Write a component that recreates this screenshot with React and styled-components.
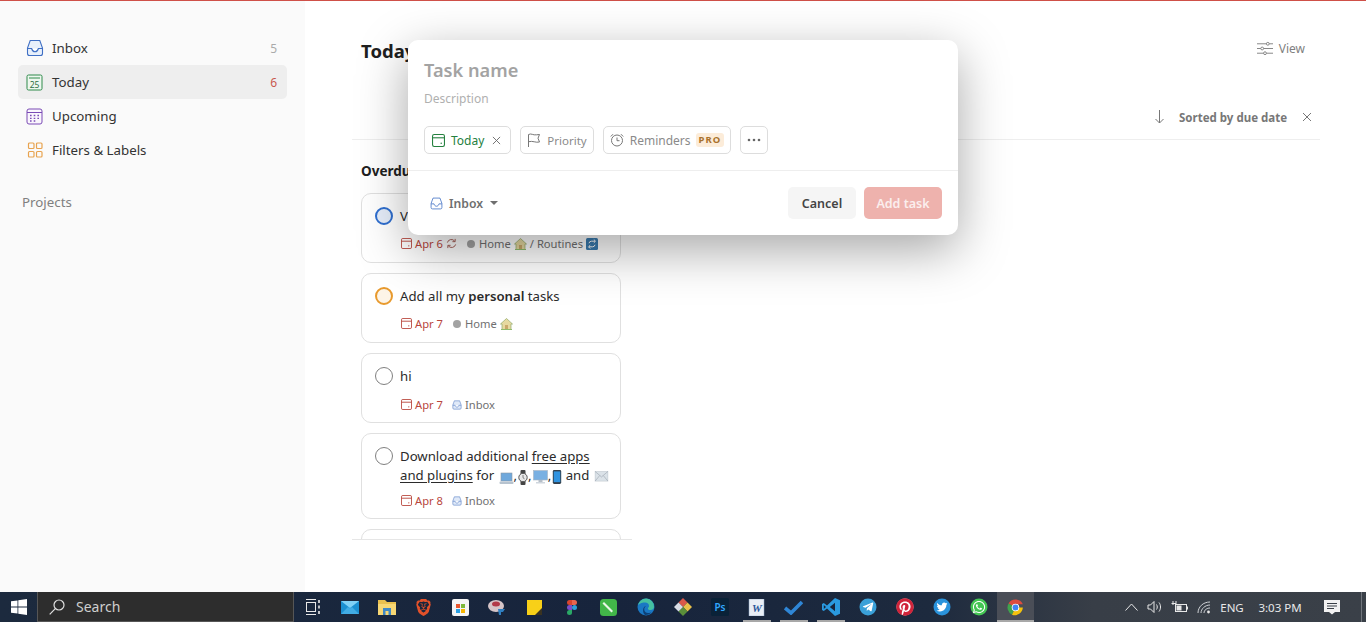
// App.jsx
import React from 'react';
import styled, { createGlobalStyle } from 'styled-components';
import { FaTwitter, FaWhatsapp, FaPinterest, FaTelegramPlane } from 'react-icons/fa';
import { SiBrave } from 'react-icons/si';

const GlobalStyle = createGlobalStyle`
  html, body { margin: 0; padding: 0; height: 100%; overflow: hidden; background: #fff; }
  body { font-family: "Noto Sans", "Open Sans", sans-serif; color: #202020; }
  * { box-sizing: border-box; }
`;

const Page = styled.div`
  position: relative;
  display: flex;
  flex-direction: column;
  height: 622px;
  border-top: 1px solid #cf5048;
`;

const Body = styled.div`
  position: relative;
  flex: 1;
  display: flex;
  min-height: 0;
`;

/* sidebar */
const Sidebar = styled.aside`
  width: 305px;
  flex-shrink: 0;
  background: #fafafa;
  padding: 30px 18px 0;
`;

const NavRow = styled.div`
  display: flex;
  align-items: center;
  height: 34px;
  padding: 0 10px 0 8px;
  border-radius: 5px;
  font-size: 13.3px;
  color: #333;
  background: ${p => (p.$active ? '#eeeeee' : 'transparent')};
`;

const NavIcon = styled.span`
  display: flex;
  width: 18px;
  margin-right: 8px;
`;

const NavLabel = styled.span`
  flex: 1;
`;

const NavCount = styled.span`
  font-size: 12px;
  color: ${p => (p.$red ? '#c9584e' : '#aaa')};
`;

const SideHeading = styled.div`
  margin: 26px 0 0 4px;
  font-size: 13.3px;
  font-weight: 400;
  color: #808080;
`;

/* main column */
const Main = styled.main`
  flex: 1;
  padding: 34px 46px 0 47px;
  min-width: 0;
`;

const Header = styled.div`
  display: flex;
  align-items: center;
  justify-content: space-between;
  height: 30px;
  padding: 0 15px 0 9px;
`;

const Title = styled.h1`
  margin: 0;
  font-size: 18.5px;
  font-weight: 700;
  color: #202020;
`;

const ViewButton = styled.div`
  display: flex;
  align-items: center;
  gap: 6px;
  margin-bottom: 3px;
  font-size: 12px;
  color: #808080;
`;

const SortRow = styled.div`
  display: flex;
  align-items: center;
  height: 38px;
  margin-top: 37px;
  padding: 0 8px 7px 0;
  justify-content: flex-end;
  border-bottom: 1px solid #eee;
  font-size: 11.5px;
  font-weight: 700;
  color: #777;
`;

const SortLabel = styled.span`
  margin: 0 15px 0 15px;
`;

const Column = styled.section`
  width: 280px;
  height: 400px;
  padding: 21px 11px 0 9px;
  overflow: hidden;
  border-bottom: 1px solid #e6e6e6;
`;

const ColumnTitle = styled.div`
  font-size: 13.5px;
  font-weight: 700;
  line-height: 20px;
  margin-bottom: 12px;
  color: #202020;
`;

const CardList = styled.div`
  display: flex;
  flex-direction: column;
  gap: 10px;
`;

const Card = styled.article`
  display: flex;
  min-height: 70px;
  padding: 13px 10px 8px 13px;
  border: 1px solid #e0e0e0;
  border-radius: 10px;
  background: #fff;
`;

const Circle = styled.span`
  flex-shrink: 0;
  width: 18px;
  height: 18px;
  margin-right: 7px;
  border-radius: 50%;
  border: ${p => (p.$color ? `2px solid ${p.$color}` : '1px solid #808080')};
  background: ${p => (p.$fill ? p.$fill : 'transparent')};
`;

const CardBody = styled.div`
  flex: 1;
  min-width: 0;
`;

const CardTitle = styled.div`
  font-size: 13.2px;
  line-height: 19px;
  color: #2b2b2b;
  white-space: nowrap;

  b { font-weight: 600; }
  u { text-underline-offset: 2px; }
`;

const Meta = styled.div`
  display: flex;
  align-items: center;
  height: 19px;
  margin-top: ${p => p.$gap}px;
  padding-left: 1px;
  font-size: 11.2px;
  color: #707070;
  white-space: nowrap;
`;

const DueDate = styled.span`
  display: flex;
  align-items: center;
  gap: 3px;
  margin-right: 9px;
  color: #b9473d;
`;

const Project = styled.span`
  display: flex;
  align-items: center;
  gap: 3px;
`;

const Dot = styled.span`
  width: 8px;
  height: 8px;
  margin: 0 1px;
  border-radius: 50%;
  background: #a3a3a3;
`;

/* quick add dialog */
const Overlay = styled.div`
  position: absolute;
  top: 39px;
  left: 0;
  right: 0;
  display: flex;
  justify-content: center;
`;

const Dialog = styled.div`
  width: 550px;
  background: #fff;
  border-radius: 10px;
  box-shadow: 0 15px 50px rgba(0, 0, 0, 0.35);
`;

const DialogTop = styled.div`
  padding: 16px 16px 16px;
  border-bottom: 1px solid #eee;
`;

const NameInput = styled.div`
  font-size: 18.2px;
  font-weight: 600;
  line-height: 28px;
  color: #a3a3a3;
`;

const DescInput = styled.div`
  margin-top: 6px;
  font-size: 12px;
  line-height: 18px;
  color: #b0b0b0;
`;

const Chips = styled.div`
  display: flex;
  gap: 9px;
  margin-top: 18px;
`;

const Chip = styled.div`
  display: flex;
  align-items: center;
  gap: 6px;
  height: 28px;
  padding: 0 ${p => p.$right || 6}px 0 ${p => p.$left || 6}px;
  border: 1px solid #ddd;
  border-radius: 5px;
  font-size: ${p => p.$size || 12}px;
  color: ${p => p.$color || '#8a8a8a'};
`;

const ChipClose = styled.span`
  display: flex;
  margin-left: 2px;
`;

const ProBadge = styled.span`
  margin-left: -1px;
  padding: 0 3px;
  border-radius: 3px;
  background: #fcecd9;
  color: #a9722c;
  font-size: 9.5px;
  font-weight: 700;
  letter-spacing: 1px;
  line-height: 14px;
`;

const DialogFoot = styled.div`
  display: flex;
  align-items: center;
  justify-content: space-between;
  padding: 16px;
`;

const ProjectPicker = styled.div`
  display: flex;
  align-items: center;
  gap: 6px;
  padding-left: 6px;
  font-size: 12.2px;
  font-weight: 600;
  color: #6f6f6f;
`;

const Caret = styled.span`
  margin-left: 1px;
  border-left: 4px solid transparent;
  border-right: 4px solid transparent;
  border-top: 4px solid #6f6f6f;
`;

const FootButtons = styled.div`
  display: flex;
  gap: 8px;
`;

const Button = styled.div`
  display: flex;
  align-items: center;
  justify-content: center;
  height: 32px;
  width: ${p => (p.$primary ? '78px' : '68px')};
  border-radius: 5px;
  font-size: 12.5px;
  font-weight: 600;
  background: ${p => (p.$primary ? '#eeb2ad' : '#f5f5f5')};
  color: ${p => (p.$primary ? '#fbeeed' : '#444')};
`;

/* windows taskbar */
const Taskbar = styled.footer`
  display: flex;
  align-items: stretch;
  height: 30px;
  flex-shrink: 0;
  background: linear-gradient(90deg, #1c2a3e 0%, #17243c 45%, #1d2a3e 68%, #383e47 80%, #3a4048 100%);
  color: #e6e6e6;
`;

const StartButton = styled.div`
  display: flex;
  align-items: center;
  justify-content: center;
  flex-shrink: 0;
  width: 37px;
`;

const SearchBox = styled.div`
  display: flex;
  align-items: center;
  gap: 11px;
  flex-shrink: 0;
  width: 257px;
  padding-left: 11px;
  background: #2d2d2d;
  border: 1px solid #565656;
  border-width: 0 1px 1px 1px;
  font-size: 14px;
  color: #cfcfcf;
`;

const Slot = styled.div`
  position: relative;
  display: flex;
  align-items: center;
  justify-content: center;
  flex-shrink: 0;
  width: 37px;
  background: ${p => (p.$active ? '#4a4e57' : 'transparent')};

  &::after {
    content: '';
    display: ${p => (p.$open || p.$active ? 'block' : 'none')};
    position: absolute;
    bottom: 0;
    left: ${p => (p.$active ? '0' : '5px')};
    right: ${p => (p.$active ? '0' : '4px')};
    height: 2px;
    background: #a8a8a8;
  }
`;

const Tray = styled.div`
  flex: 1;
  display: flex;
  align-items: center;
  padding-left: 85px;
  font-size: 11.5px;
  color: #e8e8e8;
`;

const TrayItem = styled.span`
  display: flex;
  align-items: center;
  justify-content: center;
  flex-shrink: 0;
  width: ${p => p.$w}px;
`;

const ShowDesktop = styled.span`
  width: 1px;
  height: 100%;
  margin-left: 9px;
  background: #70757c;
`;

/* emoji drawn inline sit on the text baseline, each with its own nudge */
const InlineEmoji = styled.svg`
  margin: -4px 0 -4px 1px;
  vertical-align: ${p => p.$shift}px;
`;

/* icons */
const InboxIcon = ({ size = 18, color = '#3f6fc4', fill = '#e8f0fb' }) => (
  <svg width={size} height={size} viewBox="0 0 18 18" fill="none">
    <path d="M4.2 1.5h9.6L16.5 9v5.5a2 2 0 0 1-2 2h-11a2 2 0 0 1-2-2V9z" fill={fill} stroke={color} strokeWidth="1.1" />
    <path d="M1.6 9.5h4c.6 2.300 1.800 3.300 3.400 3.300s2.800-1 3.400-3.300h4" fill="#fff" stroke={color} strokeWidth="1.100" />
  </svg>
);

const TodayIcon = () => (
  <svg width="17" height="17" viewBox="0 0 17 17" fill="none">
    <rect x="1" y="1" width="15" height="15" rx="1.500" fill="#eef7ef" stroke="#2f8a4a" />
    <path d="M3 4h11" stroke="#2f8a4a" />
    <text x="8.500" y="13.500" textAnchor="middle" fontSize="8.500" fontFamily="Noto Sans, sans-serif" fill="#2f6f42">25</text>
  </svg>
);

const UpcomingIcon = () => (
  <svg width="17" height="17" viewBox="0 0 17 17" fill="none">
    <rect x="1" y="1" width="15" height="15" rx="2" fill="#faf6fd" stroke="#7a4bb5" />
    <path d="M1 4.500h15" stroke="#7a4bb5" />
    <path d="M4 7.500h1.600M7.700 7.500h1.600M11.400 7.500H13M4 10.300h1.600M7.700 10.300h1.600M11.400 10.300H13M4 13h1.600M7.700 13h1.600" stroke="#7a4bb5" strokeWidth="1.300" />
  </svg>
);

const FiltersIcon = () => (
  <svg width="18" height="18" viewBox="0 0 18 18" fill="none" stroke="#e8a34f" strokeWidth="1.200">
    <rect x="2.500" y="2" width="5.500" height="5.500" rx="1" />
    <rect x="10.500" y="2" width="5.500" height="5.500" rx="1" />
    <rect x="2.500" y="10.500" width="5.500" height="5.500" rx="1" />
    <rect x="10.500" y="10.500" width="5.500" height="5.500" rx="1" />
  </svg>
);

const DueIcon = ({ color = '#b9473d', size = 11 }) => (
  <svg width={size} height={size} viewBox="0 0 12 12" fill="none" stroke={color}>
    <rect x="0.500" y="0.500" width="11" height="11" rx="1.500" />
    <path d="M0.500 3.500h11" />
    <circle cx="8.500" cy="8.500" r="0.700" fill={color} stroke="none" />
  </svg>
);

const Cross = ({ size = 10, color = '#777' }) => (
  <svg width={size} height={size} viewBox="0 0 10 10" stroke={color} strokeWidth="1">
    <path d="M1 1l8 8M9 1L1 9" />
  </svg>
);

const HouseEmoji = () => (
  <svg width="13" height="12" viewBox="0 0 13 12">
    <path d="M6.500 0.500L12.500 6H11v5.500H2V6H0.500z" fill="#e6d9a0" stroke="#8fab6a" strokeWidth="0.700" />
    <rect x="5" y="7" width="3" height="4.500" fill="#c9a86a" />
    <path d="M1 11.500h11" stroke="#8fbb6c" />
  </svg>
);

const RoutineEmoji = () => (
  <svg width="12" height="12" viewBox="0 0 12 12">
    <rect width="12" height="12" rx="1.500" fill="#3a7cb0" />
    <path d="M3 5.200a2.500 2.500 0 0 1 2.500-2H9M9 6.800a2.500 2.500 0 0 1-2.500 2H3" fill="none" stroke="#fff" />
    <path d="M7.800 1.500L9.500 3.200 7.800 4.800M4.200 7.200L2.500 8.800l1.700 1.700" fill="none" stroke="#fff" />
  </svg>
);

const Repeat = () => (
  <svg width="11" height="11" viewBox="0 0 12 12" fill="none" stroke="#a0544c">
    <path d="M1.500 5a4.500 4.500 0 0 1 8-1.500M10.500 7a4.500 4.500 0 0 1-8 1.500" />
    <path d="M10 1v3H7M2 11V8h3" />
  </svg>
);

const Laptop = () => (
  <InlineEmoji width="15" height="13" viewBox="0 0 15 13" $shift={-1}>
    <rect x="2" y="1" width="11" height="8" fill="#6fa8dc" stroke="#8a97a5" strokeWidth="0.600" />
    <rect x="0.500" y="9.500" width="14" height="2.500" rx="1" fill="#b7c3cf" />
  </InlineEmoji>
);

const Watch = () => (
  <InlineEmoji width="10" height="15" viewBox="0 0 10 15" $shift={-1}>
    <rect x="2.500" y="0" width="5" height="15" rx="1" fill="#444" />
    <circle cx="5" cy="7.500" r="4.200" fill="#e8e8e8" stroke="#555" />
    <path d="M5 5v2.800l1.500 1" fill="none" stroke="#555" strokeWidth="0.700" />
  </InlineEmoji>
);

const Desktop = () => (
  <InlineEmoji width="15" height="14" viewBox="0 0 15 14" $shift={0}>
    <rect x="0.500" y="0.500" width="14" height="9.500" fill="#79b0e2" stroke="#a9b5c1" strokeWidth="0.600" />
    <rect x="5.500" y="10" width="4" height="2" fill="#b5bec8" />
    <rect x="3" y="12" width="9" height="1.500" fill="#cfd6dd" />
  </InlineEmoji>
);

const Phone = () => (
  <InlineEmoji width="10" height="14" viewBox="0 0 9 15" $shift={0}>
    <rect width="9" height="15" rx="1.500" fill="#33404c" />
    <rect x="1" y="1.500" width="7" height="11.500" fill="#2f93e0" />
  </InlineEmoji>
);

const Mail = () => (
  <InlineEmoji width="15" height="11" viewBox="0 0 15 12" $shift={2}>
    <rect x="0.500" y="0.500" width="14" height="10.500" fill="#dbe2e8" stroke="#b5bec7" strokeWidth="0.500" />
    <path d="M0.500 0.500l7 6 7-6M0.500 11l5-6M14.500 11l-5-6" fill="none" stroke="#9fa9b3" strokeWidth="0.700" />
  </InlineEmoji>
);

const WinLogo = () => (
  <svg width="16" height="16" viewBox="0 0 16 16" fill="#fff">
    <path d="M0 2.300l6.500-.9v6.200H0zM7.300 1.300L16 0v7.600H7.300zM0 8.400h6.500v6.200L0 13.700zM7.300 8.400H16V16l-8.700-1.200z" />
  </svg>
);

const TaskView = () => (
  <svg width="16" height="16" viewBox="0 0 16 16" fill="none" stroke="#e8e8e8">
    <path d="M1 .5h10M1 15.500h10" />
    <rect x="1.500" y="3.500" width="9" height="9" />
    <path d="M14 1v3M14 6.500v3M14 12v3" strokeWidth="1.600" />
  </svg>
);

const Round = ({ bg, children }) => (
  <svg width="18" height="18" viewBox="0 0 18 18">
    <circle cx="9" cy="9" r="8.500" fill={bg} />
    {children}
  </svg>
);

const apps = [
  { id: 'mail', icon: (
    <svg width="18" height="14" viewBox="0 0 18 14">
      <rect y="1" width="18" height="13" fill="#1b8fd0" />
      <path d="M0 1h18L9 8z" fill="#7fd0f5" />
      <path d="M0 14l7-7 2 1.500L11 7l7 7z" fill="#42ace4" />
    </svg>
  ) },
  { id: 'files', icon: (
    <svg width="18" height="16" viewBox="0 0 18 16">
      <path d="M0 1h7l2 2h9v13H0z" fill="#e9c04f" />
      <rect y="5" width="18" height="11" fill="#f7d774" />
      <rect x="5" y="9" width="8" height="7" fill="#3f88c5" />
      <rect x="7.500" y="12" width="3" height="4" fill="#f7d774" />
    </svg>
  ) },
  { id: 'brave', icon: <SiBrave size={17} color="#e2512a" /> },
  { id: 'store', icon: (
    <svg width="17" height="17" viewBox="0 0 17 17">
      <rect width="17" height="17" rx="2" fill="#f4f4f4" />
      <rect x="4" y="5" width="4" height="4" fill="#e8572f" />
      <rect x="9" y="5" width="4" height="4" fill="#7cb83a" />
      <rect x="4" y="10" width="4" height="4" fill="#2ba0e3" />
      <rect x="9" y="10" width="4" height="4" fill="#f7b500" />
    </svg>
  ) },
  { id: 'paint', icon: (
    <svg width="19" height="16" viewBox="0 0 19 16">
      <ellipse cx="8" cy="7" rx="8" ry="6" fill="#d6c5c8" />
      <ellipse cx="8" cy="5" rx="4" ry="2.500" fill="#b23a48" />
      <path d="M10 10l7 0-2 3h-2v3h-2z" fill="#2f7fc1" />
    </svg>
  ) },
  { id: 'sticky', icon: (
    <svg width="15" height="15" viewBox="0 0 15 15">
      <rect width="15" height="15" fill="#f8d018" />
      <path d="M15 8L8 15h7z" fill="#3a3320" />
    </svg>
  ) },
  { id: 'figma', icon: (
    <svg width="10" height="15" viewBox="0 0 10 15">
      <path d="M5 0H2.500a2.500 2.500 0 0 0 0 5H5z" fill="#d8452e" />
      <path d="M5 0h2.500a2.500 2.500 0 0 1 0 5H5z" fill="#e8654f" />
      <path d="M5 5H2.500a2.500 2.500 0 0 0 0 5H5z" fill="#7b4fc9" />
      <circle cx="7.500" cy="7.500" r="2.500" fill="#2f9fd8" />
      <path d="M5 10H2.500A2.500 2.500 0 1 0 5 12.500z" fill="#2aa866" />
    </svg>
  ) },
  { id: 'evernote', icon: (
    <svg width="17" height="17" viewBox="0 0 17 17">
      <rect width="17" height="17" rx="3.500" fill="#42b649" />
      <path d="M4 3l9 9-1.500 1.500-9-9z" fill="#e9f7e7" />
    </svg>
  ) },
  { id: 'edge', icon: (
    <svg width="18" height="18" viewBox="0 0 18 18">
      <circle cx="9" cy="9" r="8.500" fill="#1a78c4" />
      <path d="M1 8a8 8 0 0 1 16 1c0 2-1.500 3-3.500 3-1.500 0-2.500-.6-2.500-1.300 0-1.700 1-1 1-2.700C12 6 10.500 4.500 8 4.500 4.500 4.500 1.500 6 1 8z" fill="#46c0a0" />
      <path d="M8 17C5.500 15 5 9 9 8c-3 2-2 7 2 7 1.500 0 3-.5 4-1.500A8.500 8.500 0 0 1 8 17z" fill="#0d3f75" />
    </svg>
  ) },
  { id: 'git', icon: (
    <svg width="18" height="18" viewBox="0 0 18 18">
      <path d="M9 0l4.500 4.500L9 9 4.500 4.500z" fill="#d9584a" />
      <path d="M13.500 4.500L18 9l-4.500 4.500L9 9z" fill="#e8c04a" />
      <path d="M9 9l4.500 4.500L9 18l-4.500-4.500z" fill="#5a8f3a" />
      <path d="M4.500 4.500L9 9l-4.500 4.500L0 9z" fill="#d9dde6" />
    </svg>
  ) },
  { id: 'ps', icon: (
    <svg width="18" height="18" viewBox="0 0 18 18">
      <rect width="18" height="18" rx="1.500" fill="#0a2238" />
      <text x="9" y="13" textAnchor="middle" fontSize="10" fontWeight="600" fontFamily="Noto Sans, sans-serif" fill="#31a8ff">Ps</text>
    </svg>
  ) },
  { id: 'word', open: true, icon: (
    <svg width="17" height="17" viewBox="0 0 17 17">
      <rect x="1" y="0" width="15" height="17" fill="#e9eef5" stroke="#8fa6c8" strokeWidth="0.500" />
      <text x="9" y="13" textAnchor="middle" fontSize="11" fontStyle="italic" fontWeight="700" fontFamily="Liberation Serif, serif" fill="#2b579a">W</text>
    </svg>
  ) },
  { id: 'tasks', open: true, icon: (
    <svg width="19" height="15" viewBox="0 0 19 15">
      <path d="M1 8l6 5L18 2" fill="none" stroke="#2f86d6" strokeWidth="3.600" />
    </svg>
  ) },
  { id: 'code', open: true, icon: (
    <svg width="18" height="18" viewBox="0 0 18 18">
      <path d="M13 0l5 2.200v13.600L13 18 5 10.500 1.800 13 0 12V6l1.800-1L5 7.500z" fill="#2a9ae0" />
      <path d="M13 4.800L7.800 9l5.200 4.200z" fill="#17243c" />
      <path d="M1.800 7v4L4 9z" fill="#17243c" />
    </svg>
  ) },
  { id: 'telegram', icon: <Round bg="#3aa0d8"><FaTelegramPlane x={3} y={3} size={12} color="#fff" /></Round> },
  { id: 'pinterest', icon: <Round bg="#fff"><FaPinterest size={18} color="#d0243a" /></Round> },
  { id: 'twitter', icon: <Round bg="#2a93dc"><FaTwitter x={3.5} y={3.5} size={11} color="#fff" /></Round> },
  { id: 'whatsapp', icon: <Round bg="#43c553"><FaWhatsapp x={2} y={2} size={14} color="#fff" /></Round> },
  { id: 'chrome', active: true, icon: (
    <svg width="17" height="17" viewBox="0 0 18 18">
      <path d="M9 9L1.600 4.800A8.500 8.500 0 0 1 16.800 5.500H9z" fill="#dd4b3e" />
      <path d="M9 9l-3.700 7.600A8.500 8.500 0 0 1 1.600 4.800z" fill="#3fa34d" />
      <path d="M9 9h7.800A8.500 8.500 0 0 1 5.300 16.600z" fill="#f4c20d" />
      <circle cx="9" cy="9" r="4" fill="#fff" />
      <circle cx="9" cy="9" r="3.100" fill="#4285f4" />
    </svg>
  ) },
];

const App = () => (
  <Page>
    <GlobalStyle />
    <Body>
      <Sidebar>
        <NavRow>
          <NavIcon><InboxIcon /></NavIcon>
          <NavLabel>Inbox</NavLabel>
          <NavCount>5</NavCount>
        </NavRow>
        <NavRow $active>
          <NavIcon><TodayIcon /></NavIcon>
          <NavLabel>Today</NavLabel>
          <NavCount $red>6</NavCount>
        </NavRow>
        <NavRow>
          <NavIcon><UpcomingIcon /></NavIcon>
          <NavLabel>Upcoming</NavLabel>
        </NavRow>
        <NavRow>
          <NavIcon><FiltersIcon /></NavIcon>
          <NavLabel>Filters &amp; Labels</NavLabel>
        </NavRow>
        <SideHeading>Projects</SideHeading>
      </Sidebar>

      <Main>
        <Header>
          <Title>Today</Title>
          <ViewButton>
            <svg width="16" height="15" viewBox="0 0 17 15" fill="none" stroke="#808080">
              <path d="M0 2.500h10M13 2.500h4M0 7.500h4M7 7.500h10M0 12.500h7M10 12.500h7" />
              <circle cx="11.500" cy="2.500" r="1.500" />
              <circle cx="5.500" cy="7.500" r="1.500" />
              <circle cx="8.500" cy="12.500" r="1.500" />
            </svg>
            View
          </ViewButton>
        </Header>
        <SortRow>
          <svg width="9" height="14" viewBox="0 0 9 14" fill="none" stroke="#777">
            <path d="M4.500 0v13M.5 9l4 4 4-4" />
          </svg>
          <SortLabel>Sorted by due date</SortLabel>
          <Cross size={10} />
        </SortRow>
        <Column>
          <ColumnTitle>Overdue</ColumnTitle>
          <CardList>
            <Card>
              <Circle $color="#2f6fd0" $fill="#e6eefa" />
              <CardBody>
                <CardTitle>V</CardTitle>
                <Meta $gap={8}>
                  <DueDate><DueIcon />Apr 6<Repeat /></DueDate>
                  <Project><Dot />Home <HouseEmoji /> / Routines <RoutineEmoji /></Project>
                </Meta>
              </CardBody>
            </Card>
            <Card>
              <Circle $color="#e89a2e" $fill="#fdf4e7" />
              <CardBody>
                <CardTitle>Add all my <b>personal</b> tasks</CardTitle>
                <Meta $gap={8}>
                  <DueDate><DueIcon />Apr 7</DueDate>
                  <Project><Dot />Home <HouseEmoji /></Project>
                </Meta>
              </CardBody>
            </Card>
            <Card>
              <Circle />
              <CardBody>
                <CardTitle>hi</CardTitle>
                <Meta $gap={9}>
                  <DueDate><DueIcon />Apr 7</DueDate>
                  <Project><InboxIcon size={10} color="#5f86c9" fill="#dfe9f8" />Inbox</Project>
                </Meta>
              </CardBody>
            </Card>
            <Card>
              <Circle />
              <CardBody>
                <CardTitle>
                  Download additional <u>free apps</u><br />
                  <u>and plugins</u> for <Laptop />,<Watch />,<Desktop />,<Phone /> and <Mail />
                </CardTitle>
                <Meta $gap={6}>
                  <DueDate><DueIcon />Apr 8</DueDate>
                  <Project><InboxIcon size={10} color="#5f86c9" fill="#dfe9f8" />Inbox</Project>
                </Meta>
              </CardBody>
            </Card>
            <Card />
          </CardList>
        </Column>
      </Main>

      <Overlay>
        <Dialog>
          <DialogTop>
            <NameInput>Task name</NameInput>
            <DescInput>Description</DescInput>
            <Chips>
              <Chip $color="#25803f" $left={7} $right={9}>
                <DueIcon color="#25803f" size={13} />
                Today
                <ChipClose><Cross size={9} color="#666" /></ChipClose>
              </Chip>
              <Chip $size={11.5}>
                <svg width="14" height="14" viewBox="0 0 14 14" fill="none" stroke="#777">
                  <path d="M1.500 14V1.500c3-1.500 4.500 1 8 .3l3-.3-1.500 3.700 1.500 3.800c-4 1-6.500-1.500-11-.3" />
                </svg>
                Priority
              </Chip>
              <Chip>
                <svg width="14" height="14" viewBox="0 0 14 14" fill="none" stroke="#777">
                  <circle cx="7" cy="7.500" r="5.500" />
                  <path d="M7 4.500v3.200h2.500M.8 3.500L3 1.200M13.200 3.500L11 1.200" />
                </svg>
                Reminders
                <ProBadge>PRO</ProBadge>
              </Chip>
              <Chip>
                <svg width="14" height="4" viewBox="0 0 14 4" fill="#666">
                  <circle cx="2" cy="2" r="1.300" />
                  <circle cx="7" cy="2" r="1.300" />
                  <circle cx="12" cy="2" r="1.300" />
                </svg>
              </Chip>
            </Chips>
          </DialogTop>
          <DialogFoot>
            <ProjectPicker>
              <InboxIcon size={13} color="#3f6fc4" fill="#fff" />
              Inbox
              <Caret />
            </ProjectPicker>
            <FootButtons>
              <Button>Cancel</Button>
              <Button $primary>Add task</Button>
            </FootButtons>
          </DialogFoot>
        </Dialog>
      </Overlay>
    </Body>

    <Taskbar>
      <StartButton><WinLogo /></StartButton>
      <SearchBox>
        <svg width="16" height="16" viewBox="0 0 16 16" fill="none" stroke="#e0e0e0" strokeWidth="1.200">
          <circle cx="10" cy="6" r="5" />
          <path d="M6.300 9.700L.7 15.300" />
        </svg>
        Search
      </SearchBox>
      <Slot><TaskView /></Slot>
      {apps.map(app => (
        <Slot key={app.id} $open={app.open} $active={app.active}>{app.icon}</Slot>
      ))}
      <Tray>
        <TrayItem $w={24}>
          <svg width="13" height="8" viewBox="0 0 13 8" fill="none" stroke="#e8e8e8"><path d="M.5 7.500l6-6.500 6 6.500" /></svg>
        </TrayItem>
        <TrayItem $w={24}>
          <svg width="16" height="14" viewBox="0 0 16 14" fill="none" stroke="#e8e8e8">
            <path d="M1 5h2.500L7 1.500v11L3.500 9H1zM9.500 4.500c1 1.500 1 3.500 0 5M12 2.500c2 2.500 2 6.500 0 9" />
          </svg>
        </TrayItem>
        <TrayItem $w={25}>
          <svg width="17" height="12" viewBox="0 0 17 12" fill="none" stroke="#e8e8e8">
            <rect x="4.500" y="3.500" width="11" height="7" />
            <rect x="5.500" y="4.500" width="5" height="5" fill="#e8e8e8" stroke="none" />
            <path d="M16.500 5.500v3M2 0v4M5 0v2M.5 2.500h5" />
          </svg>
        </TrayItem>
        <TrayItem $w={24}>
          <svg width="14" height="13" viewBox="0 0 14 13" fill="none" stroke="#cfd2d6">
            <path d="M1 12C1 6 6 1 13 1M4 12c0-4 4-8 9-8M7 12c0-3 3-5 6-5" />
            <circle cx="11.500" cy="11" r="1.400" fill="#e8e8e8" stroke="none" />
          </svg>
        </TrayItem>
        <TrayItem $w={32}>ENG</TrayItem>
        <TrayItem $w={64}>3:03 PM</TrayItem>
        <TrayItem $w={40}>
          <svg width="16" height="16" viewBox="0 0 16 16">
            <path d="M0 1h16v12h-5l-3 2.500L5 13H0z" fill="#f2f2f2" />
            <path d="M3 4.500h10M3 7h10M3 9.500h7" stroke="#3a4048" />
          </svg>
        </TrayItem>
        <ShowDesktop />
      </Tray>
    </Taskbar>
  </Page>
);

export default App;
